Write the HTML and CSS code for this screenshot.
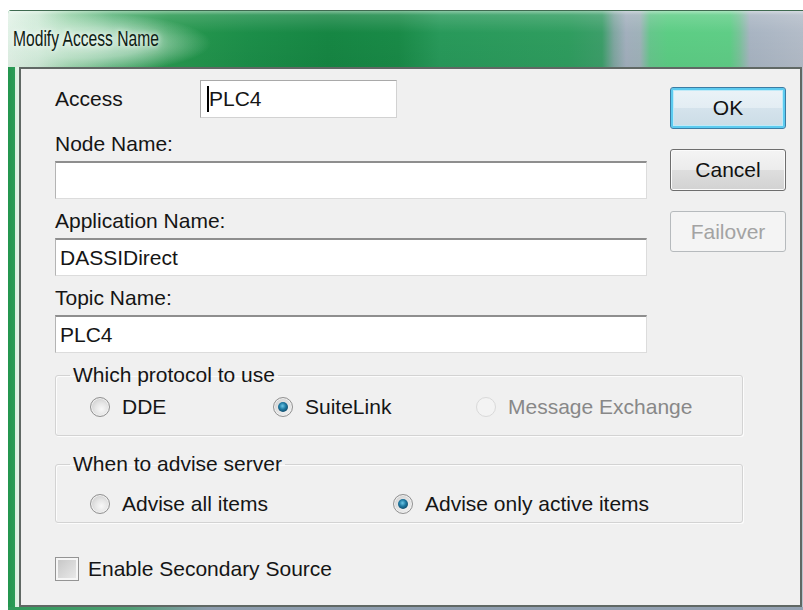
FILE: index.html
```html
<!DOCTYPE html>
<html lang="en">
<head>
<meta charset="utf-8">
<title>Modify Access Name</title>
<link rel="stylesheet" href="styles.css">
</head>
<body>
<div class="window">
  <div class="titlebar"><span class="title">Modify Access Name</span></div>
  <div class="client">
    <div class="top">
      <div class="fields">
        <div class="access-row">
          <span class="label label-inline">Access</span>
          <div class="field field-short"><span class="caret"></span>PLC4</div>
        </div>
        <div class="label">Node Name:</div>
        <div class="field"></div>
        <div class="label">Application Name:</div>
        <div class="field">DASSIDirect</div>
        <div class="label">Topic Name:</div>
        <div class="field">PLC4</div>
      </div>
      <div class="buttons">
        <div class="btn btn-default">OK</div>
        <div class="btn">Cancel</div>
        <div class="btn btn-disabled">Failover</div>
      </div>
    </div>

    <fieldset class="group group-protocol">
      <legend>Which protocol to use</legend>
      <div class="options options-protocol">
        <div class="option"><span class="radio"></span>DDE</div>
        <div class="option"><span class="radio radio-on"></span>SuiteLink</div>
        <div class="option option-disabled"><span class="radio radio-off"></span>Message Exchange</div>
      </div>
    </fieldset>

    <fieldset class="group group-advise">
      <legend>When to advise server</legend>
      <div class="options options-advise">
        <div class="option"><span class="radio"></span>Advise all items</div>
        <div class="option"><span class="radio radio-on"></span>Advise only active items</div>
      </div>
    </fieldset>

    <div class="check"><span class="box"></span>Enable Secondary Source</div>
  </div>
  <div class="frame-bottom"></div>
</div>
</body>
</html>
```

FILE: styles.css
```css
html, body {
  margin: 0;
  padding: 0;
  background: #ffffff;
}

body {
  width: 803px;
  height: 610px;
  overflow: hidden;
  font-family: "Liberation Sans", Arial, sans-serif;
  font-size: 21px;
  line-height: 24px;
  color: #151515;
}

/* window frame */
.window {
  margin: 10px 0 0 8px;
  width: 795px;
  height: 600px;
  display: flex;
  flex-direction: column;
  border-top-left-radius: 4px;
  overflow: hidden;
  background: linear-gradient(to right, #23954e 0, #2c9c58 7px, #d8eede 7px, #e6f4ea 11px, #b9c2cd 11px);
}

.titlebar {
  height: 57px;
  flex: none;
  box-sizing: border-box;
  border-top: 1px solid #3f6a50;
  padding: 14px 0 0 5px;
  background:
    linear-gradient(to bottom, rgba(255,255,255,0.45) 0, rgba(255,255,255,0.15) 4px, rgba(255,255,255,0) 22px, rgba(0,0,0,0.03) 56px),
    radial-gradient(ellipse 125px 30px at 78px 32px, rgba(222,242,229,0.9) 0, rgba(222,242,229,0.6) 50%, rgba(222,242,229,0) 100%),
    linear-gradient(to right,
      #e2f2e7 0, #cbe8d4 30px, #8ccd9f 62px, #4eae70 105px, #28984f 160px,
      #1c8e49 240px, #168643 320px, #198a47 390px, #28995a 432px, #2f9d5f 560px,
      #3c9e69 594px, #7fa6a0 606px, #a2afbd 618px, #9fb2b9 632px, #66c68c 642px,
      #5ccd84 660px, #5fcd86 722px, #7cc29c 732px, #a8b4c2 742px, #b3bcc8 795px);
}

.title {
  display: inline-block;
  font-size: 22px;
  line-height: 28px;
  color: #0f1c14;
  transform: scaleX(0.71);
  transform-origin: left center;
  text-shadow: 0 0 6px rgba(255,255,255,0.9), 0 0 12px rgba(255,255,255,0.7);
}

.client {
  flex: 1;
  box-sizing: border-box;
  margin: 0 1px 0 11px;
  border: 2px solid #606864;
  background: #f0f0f0;
  padding: 11px 0 0 34px;
}

.frame-bottom {
  height: 3px;
  flex: none;
  background: linear-gradient(to right, #2f9a5a 0, #4f9f74 120px, #8c9cad 200px, #95a2b3 795px);
}

/* upper area: text fields + command buttons */
.top {
  display: flex;
}

.fields {
  width: 592px;
  display: flex;
  flex-direction: column;
}

.access-row {
  display: flex;
  align-items: center;
  margin-bottom: 4px;
}

.label {
  margin-top: 10px;
  height: 24px;
}

.label-inline {
  margin-top: 0;
  width: 145px;
}

.field {
  margin-top: 5px;
  height: 38px;
  box-sizing: border-box;
  background: #ffffff;
  border: 1px solid #dcdcdc;
  border-top: 2px solid #8e8e8e;
  border-left-color: #b4b4b4;
  display: flex;
  align-items: center;
  padding-left: 4px;
}

.field-short {
  margin-top: 0;
  width: 197px;
  border: 1px solid #a9a9a9;
  border-right-color: #d2d2d2;
  border-bottom-color: #d2d2d2;
  padding-left: 6px;
}

.caret {
  display: inline-block;
  width: 2px;
  height: 26px;
  background: #000;
}

.buttons {
  margin-left: 23px;
  width: 116px;
  padding-top: 7px;
  display: flex;
  flex-direction: column;
  gap: 20px;
}

.btn {
  height: 42px;
  box-sizing: border-box;
  border: 1px solid #6e6e6e;
  border-radius: 3px;
  background: linear-gradient(#f4f4f4, #ececec 50%, #dedede 50%, #d2d2d2);
  box-shadow: inset 0 0 0 1px #fbfbfb;
  display: flex;
  align-items: center;
  justify-content: center;
  color: #111;
}

.btn-default {
  border-color: #3b7ca4;
  background: linear-gradient(#ebf3f8, #e3edf3 50%, #d5e3ec 50%, #cbdce6);
  box-shadow: inset 0 0 0 2px #5ccbf0, inset 0 0 0 3px #bfeaf8;
}

.btn-disabled {
  height: 41px;
  border-color: #b6babd;
  background: #f4f4f4;
  box-shadow: none;
  color: #a3a3a3;
}

/* group boxes */
.group {
  margin: 10px 0 0 0;
  width: 688px;
  min-inline-size: 0;
  box-sizing: border-box;
  border: 1px solid #d3d3d3;
  border-radius: 3px;
  box-shadow: inset 1px 1px 0 #fcfcfc, 1px 1px 0 #fcfcfc;
  padding: 8px 0 16px 0;
}

.group legend {
  margin-left: 14px;
  padding: 0 3px;
  line-height: 24px;
}

.group-advise {
  margin-top: 16px;
  padding: 16px 0 6px 0;
}

.options {
  display: grid;
  align-items: center;
  height: 24px;
  padding-left: 34px;
}

.options-protocol {
  grid-template-columns: 183px 203px auto;
}

.options-advise {
  grid-template-columns: 303px auto;
}

.option {
  display: flex;
  align-items: center;
  gap: 12px;
  white-space: nowrap;
}

.option-disabled {
  color: #888888;
}

.radio {
  position: relative;
  flex: none;
  width: 20px;
  height: 20px;
  box-sizing: border-box;
  border-radius: 50%;
  border: 1px solid #929292;
  background: radial-gradient(circle at 58% 62%, #f8f8f8 0, #e6e6e6 40%, #cdcdcd 80%);
  box-shadow: inset 0 0 0 1px #f2f2f2;
}

.radio-on::after {
  content: "";
  position: absolute;
  left: 4px;
  top: 4px;
  width: 10px;
  height: 10px;
  border-radius: 50%;
  background: radial-gradient(circle at 45% 40%, #6cc7e6 0, #1f7aa3 40%, #0c3f5c 85%);
}

.radio-off {
  border-color: #d9d9d9;
  background: #f3f3f3;
  box-shadow: none;
}

/* checkbox */
.check {
  margin-top: 34px;
  display: flex;
  align-items: center;
  gap: 9px;
  height: 24px;
}

.box {
  width: 24px;
  height: 24px;
  box-sizing: border-box;
  border: 1px solid #949494;
  background: linear-gradient(135deg, #c4c4c4, #ececec);
  box-shadow: inset 0 0 0 2px #f6f6f6;
}
```
